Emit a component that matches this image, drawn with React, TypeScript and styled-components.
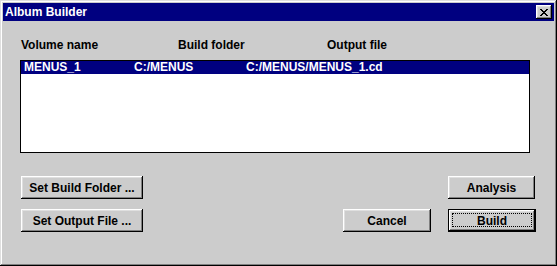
import React from "react"
import styled, { createGlobalStyle } from "styled-components"

const GlobalStyle = createGlobalStyle`
  html, body {
    margin: 0;
    padding: 0;
    background: #cccccc;
  }
  * {
    box-sizing: border-box;
  }
`

const Window = styled.div`
  width: 557px;
  height: 266px;
  padding: 3px;
  display: flex;
  flex-direction: column;
  background: #cccccc;
  font-family: "Liberation Sans", Arial, sans-serif;
  font-size: 12px;
  font-weight: bold;
  line-height: 14px;
  color: #000;
  box-shadow: inset -1px -1px #000, inset 1px 1px #dfdfdf,
    inset -2px -2px #808080, inset 2px 2px #fff;
`

const TitleBar = styled.div`
  height: 18px;
  padding: 0 2px;
  display: flex;
  align-items: center;
  justify-content: space-between;
  background: #000080;
  color: #fff;
`

const CloseButton = styled.button`
  width: 16px;
  height: 14px;
  padding: 0;
  border: none;
  display: flex;
  align-items: center;
  justify-content: center;
  background: #cccccc;
  box-shadow: inset -1px -1px #000, inset 1px 1px #fff,
    inset -2px -2px #808080, inset 2px 2px #dfdfdf;
`

const Body = styled.div`
  flex: 1;
  padding: 17px 18px 0 17px;
  display: flex;
  flex-direction: column;
`

const Columns = styled.div<{ $cols: string }>`
  display: grid;
  grid-template-columns: ${p => p.$cols};
  height: 14px;
  white-space: nowrap;
`

const Headers = styled(Columns)`
  padding-left: 1px;
`

const ListBox = styled.div`
  margin-top: 8px;
  width: 510px;
  height: 93px;
  border: 1px solid #000;
  background: #fff;
`

const Row = styled(Columns)<{ $selected?: boolean }>`
  height: 13px;
  line-height: 13px;
  padding-left: 3px;
  background: ${p => (p.$selected ? "#000080" : "transparent")};
  color: ${p => (p.$selected ? "#fff" : "#000")};
`

const Footer = styled.div`
  margin-top: 23px;
  display: flex;
  justify-content: space-between;
`

const Stack = styled.div`
  padding-left: 1px;
  display: flex;
  flex-direction: column;
  gap: 10px;
`

const RightGrid = styled.div`
  display: grid;
  grid-template-columns: 88px 88px;
  column-gap: 17px;
  row-gap: 10px;
`

const Button = styled.button<{ $w: number; $default?: boolean }>`
  position: relative;
  width: ${p => p.$w}px;
  height: 23px;
  padding: 0;
  border: ${p => (p.$default ? "1px solid #000" : "none")};
  background: #cccccc;
  font: inherit;
  color: #000;
  box-shadow: inset -1px -1px #000, inset 1px 1px #fff,
    inset -2px -2px #808080, inset 2px 2px #dfdfdf;
`

const FocusRing = styled.span`
  position: absolute;
  inset: 3px 3px 4px 3px;
  border: 1px dotted #000;
`

const Spacer = styled.div``

const CloseIcon = () => (
  <svg width="8" height="7" viewBox="0 0 8 7" shapeRendering="crispEdges">
    <path
      d="M0 0h2v1h1v1h2v-1h1v-1h2v1h-1v1h-1v1h-1v1h1v1h1v1h1v1h-2v-1h-1v-1h-2v1h-1v1h-2v-1h1v-1h1v-1h1v-1h-1v-1h-1v-1h-1z"
      fill="#000"
    />
  </svg>
)

const cols = "157px 149px 1fr"
const rowCols = "110px 112px 1fr"

const App = () => (
  <>
    <GlobalStyle />
    <Window>
      <TitleBar>
        <span>Album Builder</span>
        <CloseButton aria-label="Close">
          <CloseIcon />
        </CloseButton>
      </TitleBar>
      <Body>
        <Headers $cols={cols}>
          <span>Volume name</span>
          <span>Build folder</span>
          <span>Output file</span>
        </Headers>
        <ListBox>
          <Row $cols={rowCols} $selected>
            <span>MENUS_1</span>
            <span>C:/MENUS</span>
            <span>C:/MENUS/MENUS_1.cd</span>
          </Row>
        </ListBox>
        <Footer>
          <Stack>
            <Button $w={122}>Set Build Folder ...</Button>
            <Button $w={122}>Set Output File ...</Button>
          </Stack>
          <RightGrid>
            <Spacer />
            <Button $w={87}>Analysis</Button>
            <Button $w={88}>Cancel</Button>
            <Button $w={88} $default>
              <FocusRing />
              Build
            </Button>
          </RightGrid>
        </Footer>
      </Body>
    </Window>
  </>
)

export default App
